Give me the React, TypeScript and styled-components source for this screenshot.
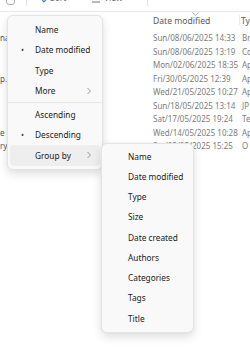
import React from 'react';
import styled, { createGlobalStyle } from 'styled-components';

const GlobalStyle = createGlobalStyle`
  html, body {
    margin: 0;
    padding: 0;
    background: #ffffff;
  }
  body {
    font-family: 'Noto Sans', 'Open Sans', sans-serif;
    color: #1b1b1b;
  }
`;

// Dummy data for the file list behind the menu
const files = [
  { stub: 'na', date: 'Sun/08/06/2025 14:33', type: 'Br' },
  { stub: '', date: 'Sun/08/06/2025 13:19', type: 'Co' },
  { stub: '', date: 'Mon/02/06/2025 18:35', type: 'Ap' },
  { stub: 'p.', date: 'Fri/30/05/2025 12:39', type: 'Ap' },
  { stub: '', date: 'Wed/21/05/2025 10:27', type: 'Ap' },
  { stub: '', date: 'Sun/18/05/2025 13:14', type: 'JP' },
  { stub: '', date: 'Sat/17/05/2025 19:24', type: 'Te' },
  { stub: 'e', date: 'Wed/14/05/2025 10:28', type: 'Ap' },
  { stub: 'ry.', date: 'Sat/03/05/2025 15:25', type: 'O' },
];

const sortItems = [
  { label: 'Name' },
  { label: 'Date modified', checked: true },
  { label: 'Type' },
  { label: 'More', sub: true },
];

const orderItems = [
  { label: 'Ascending' },
  { label: 'Descending', checked: true },
  { label: 'Group by', sub: true, hover: true },
];

const groupItems = [
  'Name',
  'Date modified',
  'Type',
  'Size',
  'Date created',
  'Authors',
  'Categories',
  'Tags',
  'Title',
];

const Chevron = () => (
  <svg width="6" height="8" viewBox="0 0 6 8">
    <path d="M1.5 1 L4.5 4 L1.5 7" fill="none" stroke="#8a8a8a" strokeWidth="0.9" />
  </svg>
);

const App: React.FC = () => {
  return (
    <Page>
      <GlobalStyle />
      <Toolbar>
        <ToolItem left={6}>
          <CheckBoxIcon />
        </ToolItem>
        <ToolItem left={26}>
          <ToolDivider />
        </ToolItem>
        <ToolItem left={41}>
          <svg width="6" height="9" viewBox="0 0 6 9">
            <path d="M3 0 V8 M0.8 6 L3 8.2 L5.2 6" fill="none" stroke="#2a6fc9" strokeWidth="1" />
          </svg>
          <ToolText>Sort</ToolText>
        </ToolItem>
        <ToolItem left={92}>
          <svg width="9" height="9" viewBox="0 0 9 9">
            <path d="M0 2 H8 M0 5 H8 M0 8 H8" fill="none" stroke="#666" strokeWidth="0.9" />
          </svg>
          <ToolText>View</ToolText>
        </ToolItem>
        <ToolItem left={147}>
          <ToolDivider />
        </ToolItem>
      </Toolbar>

      <FileList>
        <HeaderRow>
          <span />
          <HeaderCell>
            <SortCaret>
              <svg width="7" height="4" viewBox="0 0 7 4">
                <path d="M0.5 0.5 L3.5 3.5 L6.5 0.5" fill="none" stroke="#9a9a9a" strokeWidth="0.8" />
              </svg>
            </SortCaret>
            Date modified
          </HeaderCell>
          <HeaderCell divided>Ty</HeaderCell>
        </HeaderRow>
        <Rows>
          {files.map((f, i) => (
            <FileRow key={i}>
              <StubCell>{f.stub}</StubCell>
              <DateCell>{f.date}</DateCell>
              <TypeCell>{f.type}</TypeCell>
            </FileRow>
          ))}
        </Rows>
      </FileList>

      <SortMenu>
        {sortItems.map((it) => (
          <MenuItem key={it.label}>
            <Bullet>{it.checked ? '•' : ''}</Bullet>
            <Label>{it.label}</Label>
            {it.sub && <Chevron />}
          </MenuItem>
        ))}
        <Separator />
        {orderItems.map((it) => (
          <MenuItem key={it.label} hover={it.hover}>
            <Bullet>{it.checked ? '•' : ''}</Bullet>
            <Label>{it.label}</Label>
            {it.sub && <Chevron />}
          </MenuItem>
        ))}
      </SortMenu>

      <GroupMenu>
        {groupItems.map((label) => (
          <SubItem key={label}>{label}</SubItem>
        ))}
      </GroupMenu>
    </Page>
  );
};

export default App;

const Page = styled.div`
  position: relative;
  width: 250px;
  height: 351px;
  overflow: hidden;
  background: #ffffff;
`;

// toolbar is scrolled mostly out of view: only the bottom of its items shows
const Toolbar = styled.div`
  position: relative;
  height: 11px;
  border-bottom: 1px solid #e8e8e8;
  overflow: hidden;
  font-size: 8.5px;
  color: #666;
`;

const ToolItem = styled.div<{ left: number }>`
  position: absolute;
  left: ${({ left }) => left}px;
  bottom: 8px;
  display: flex;
  align-items: center;
  gap: 3px;
`;

const ToolText = styled.span`
  line-height: 10px;
`;

const CheckBoxIcon = styled.div`
  width: 7px;
  height: 7px;
  margin-bottom: -2px;
  border: 1px solid #b0b0b0;
  border-radius: 3px;
`;

const ToolDivider = styled.div`
  width: 1px;
  height: 12px;
  margin-bottom: -3px;
  background: #e2e2e2;
`;

const FileList = styled.div`
  display: flex;
  flex-direction: column;
  gap: 2px;
`;

const columns = `
  display: grid;
  grid-template-columns: 153px 86px 11px;
`;

const HeaderRow = styled.div`
  ${columns}
  height: 17px;
`;

const HeaderCell = styled.div<{ divided?: boolean }>`
  position: relative;
  display: flex;
  align-items: center;
  padding-left: ${({ divided }) => (divided ? '2px' : '0')};
  font-size: 8.6px;
  color: #5a5a5a;
  white-space: nowrap;
  overflow: ${({ divided }) => (divided ? 'hidden' : 'visible')};
  &::before {
    content: '';
    display: ${({ divided }) => (divided ? 'block' : 'none')};
    position: absolute;
    left: 0;
    top: 3px;
    height: 10px;
    width: 1px;
    background: #ececec;
  }
`;

const SortCaret = styled.div`
  position: absolute;
  top: 0;
  left: 39px;
  line-height: 0;
`;

const Rows = styled.div`
  display: flex;
  flex-direction: column;
`;

const FileRow = styled.div`
  ${columns}
  height: 13.5px;
  align-items: center;
  font-size: 8px;
  color: #7c7c7c;
  white-space: nowrap;
`;

const StubCell = styled.div`
  color: #555;
`;

const DateCell = styled.div``;

const TypeCell = styled.div`
  padding-left: 3px;
  overflow: hidden;
`;

const MenuPanel = styled.div`
  position: absolute;
  box-sizing: border-box;
  background: #f9f9f9;
  border: 1px solid #e4e4e4;
  border-radius: 6px;
  box-shadow: 0 4px 10px rgba(0, 0, 0, 0.13), 0 0 2px rgba(0, 0, 0, 0.06);
  font-size: 8.3px;
  color: #1b1b1b;
`;

const SortMenu = styled(MenuPanel)`
  left: 7px;
  top: 15px;
  width: 96px;
  padding: 3px 2px 3px;
`;

const GroupMenu = styled(MenuPanel)`
  left: 101px;
  top: 143px;
  width: 93px;
  padding: 2px 2px 4px;
  z-index: 2;
`;

const MenuItem = styled.div<{ hover?: boolean }>`
  display: flex;
  align-items: center;
  height: 20.5px;
  padding-right: 8px;
  border-radius: 4px;
  background: ${({ hover }) => (hover ? '#eeeeee' : 'transparent')};
`;

const Bullet = styled.span`
  width: 25px;
  padding-left: 11px;
  box-sizing: border-box;
  font-size: 8px;
  color: #444;
`;

const Label = styled.span`
  flex: 1;
  white-space: nowrap;
`;

const Separator = styled.div`
  height: 1px;
  margin: 1px -2px;
  background: #e6e6e6;
`;

const SubItem = styled.div`
  display: flex;
  align-items: center;
  height: 20.25px;
  padding-left: 24px;
  white-space: nowrap;
`;
